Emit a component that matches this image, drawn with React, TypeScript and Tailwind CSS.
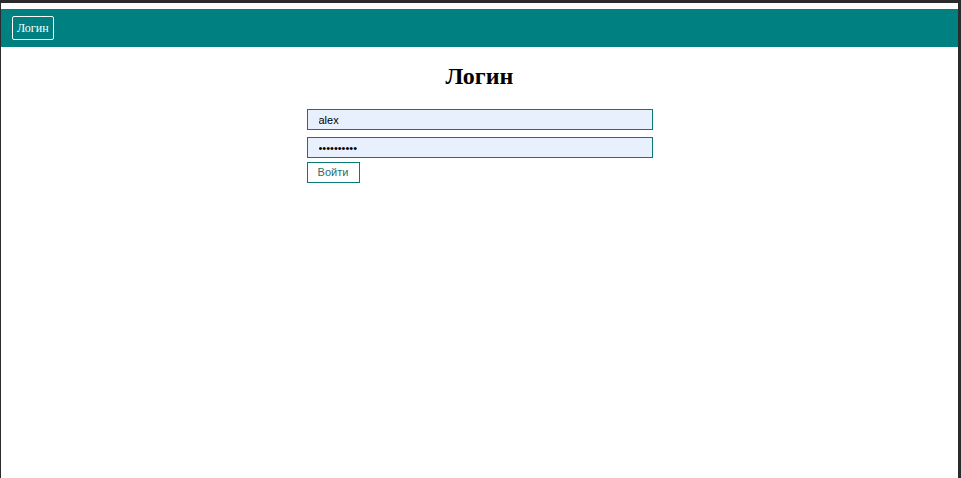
import React from "react";

const App = () => {
  return (
    <div className="h-[478px] w-[961px] overflow-hidden border-t-[3px] border-l border-r-[3px] border-[#2b2b2b] bg-white">
      <div className="h-[6px]" />
      {/* Header */}
      <header className="flex h-[38px] items-center bg-[#008080] px-[11px]">
        <button
          className="flex h-[24px] items-center rounded-[2px] border border-white px-[4px] text-[12px] text-white"
          style={{ fontFamily: '"Liberation Serif", serif' }}
        >
          Логин
        </button>
      </header>

      {/* Login form */}
      <main className="flex flex-col items-center">
        <h1
          className="mt-[15px] text-[24px] font-bold leading-[28px] text-black"
          style={{ fontFamily: '"Liberation Serif", serif' }}
        >
          Логин
        </h1>
        <form
          className="mt-[19px] flex w-[346px] flex-col"
          style={{ fontFamily: '"Liberation Sans", Arial, sans-serif' }}
          onSubmit={(e) => e.preventDefault()}
        >
          <input
            type="text"
            defaultValue="alex"
            className="h-[21px] w-full border border-[#0a7a78] bg-[#e8f0fe] px-[11px] text-[11px] text-black outline-none"
          />
          <input
            type="password"
            defaultValue="1234567890"
            className="mt-[7px] h-[21px] w-full border border-[#0a7a78] bg-[#e8f0fe] px-[11px] text-[11px] text-black outline-none"
          />
          <button
            type="submit"
            className="mt-[4px] h-[21px] w-[53px] border border-[#0a7a78] bg-white text-[11px] text-[#1f6f6d]"
          >
            Войти
          </button>
        </form>
      </main>
    </div>
  );
};

export default App;
